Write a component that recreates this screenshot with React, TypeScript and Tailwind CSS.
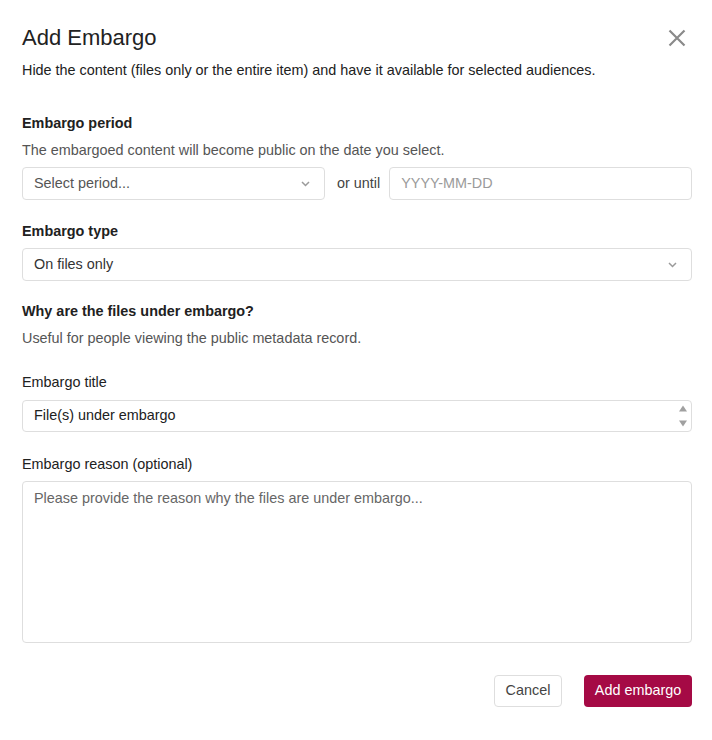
import React from "react";

const font = { fontFamily: '"Liberation Sans", Arial, sans-serif' };

function Chevron() {
  return (
    <svg width="9" height="6" viewBox="0 0 9 6" className="shrink-0">
      <path d="M1 1 L4.5 4.5 L8 1" fill="none" stroke="#9a9a9a" strokeWidth="1.5" />
    </svg>
  );
}

function SelectBox({ value, muted, className }: { value: string; muted?: boolean; className?: string }) {
  return (
    <div
      className={`flex h-[33px] items-center justify-between rounded-[4px] border border-[#dedede] bg-white pl-[11px] pr-[14px] text-[14.4px] ${
        muted ? "text-[#555555]" : "text-[#333333]"
      } ${className ?? ""}`}
    >
      <span>{value}</span>
      <Chevron />
    </div>
  );
}

export default function App() {
  return (
    <div className="min-h-[740px] w-[712px] bg-white" style={font}>
      <div className="pl-[22px] pr-[20px] pt-[25px] text-[#212121]">
        <div className="flex items-center justify-between">
          <h1 className="text-[22px] leading-[26px] text-[#222222]">Add Embargo</h1>
          <svg width="18" height="18" viewBox="0 0 18 18" className="mr-[6px]">
            <path d="M1.5 1.5 L16.5 16.5 M16.5 1.5 L1.5 16.5" stroke="#8a8a8a" strokeWidth="2.2" />
          </svg>
        </div>
        <p className="mt-[9px] text-[14.4px] leading-[20px] text-[#212121]">
          Hide the content (files only or the entire item) and have it available for selected audiences.
        </p>

        <h2 className="mt-[33px] text-[14.4px] font-bold leading-[20px] text-[#212121]">Embargo period</h2>
        <p className="mt-[7px] text-[14.4px] leading-[20px] text-[#555555]">
          The embargoed content will become public on the date you select.
        </p>
        <div className="mt-[7px] flex items-center">
          <SelectBox value="Select period..." muted className="w-[303px]" />
          <span className="ml-[12px] mr-[9px] text-[14.4px] text-[#444444]">or until</span>
          <div className="flex h-[33px] flex-1 items-center rounded-[4px] border border-[#dedede] pl-[11px] text-[14.4px] text-[#9a9a9a]">
            YYYY-MM-DD
          </div>
        </div>

        <h2 className="mt-[21px] text-[14.4px] font-bold leading-[20px] text-[#212121]">Embargo type</h2>
        <SelectBox value="On files only" className="mt-[7px]" />

        <h2 className="mt-[20px] text-[14.4px] font-bold leading-[20px] text-[#212121]">
          Why are the files under embargo?
        </h2>
        <p className="mt-[7px] text-[14.4px] leading-[20px] text-[#555555]">
          Useful for people viewing the public metadata record.
        </p>

        <label className="mt-[24px] block text-[14.4px] leading-[20px] text-[#212121]">Embargo title</label>
        <div className="mt-[8px] flex h-[32px] items-center justify-between rounded-[4px] border border-[#dedede] pl-[11px] pr-[3px] text-[14.4px] text-[#212121]">
          <span>File(s) under embargo</span>
          <svg width="10" height="26" viewBox="0 0 10 26">
            <path d="M5 2.5 L9 8.5 L1 8.5 Z" fill="#a0a0a0" />
            <path d="M1 17.5 L9 17.5 L5 23.5 Z" fill="#a0a0a0" />
          </svg>
        </div>

        <label className="mt-[22px] block text-[14.4px] leading-[20px] text-[#212121]">
          Embargo reason (optional)
        </label>
        <div className="mt-[7px] h-[162px] rounded-[4px] border border-[#dedede] px-[11px] pt-[6px] text-[14.4px] leading-[20px] text-[#666666]">
          Please provide the reason why the files are under embargo...
        </div>

        <div className="mt-[32px] flex justify-end gap-[22px]">
          <button className="h-[32px] w-[68px] rounded-[4px] border border-[#dedede] bg-white text-[14.4px] text-[#444444]">
            Cancel
          </button>
          <button className="h-[32px] w-[108px] rounded-[4px] bg-[#a50a45] text-[14.4px] text-white">
            Add embargo
          </button>
        </div>
      </div>
    </div>
  );
}
